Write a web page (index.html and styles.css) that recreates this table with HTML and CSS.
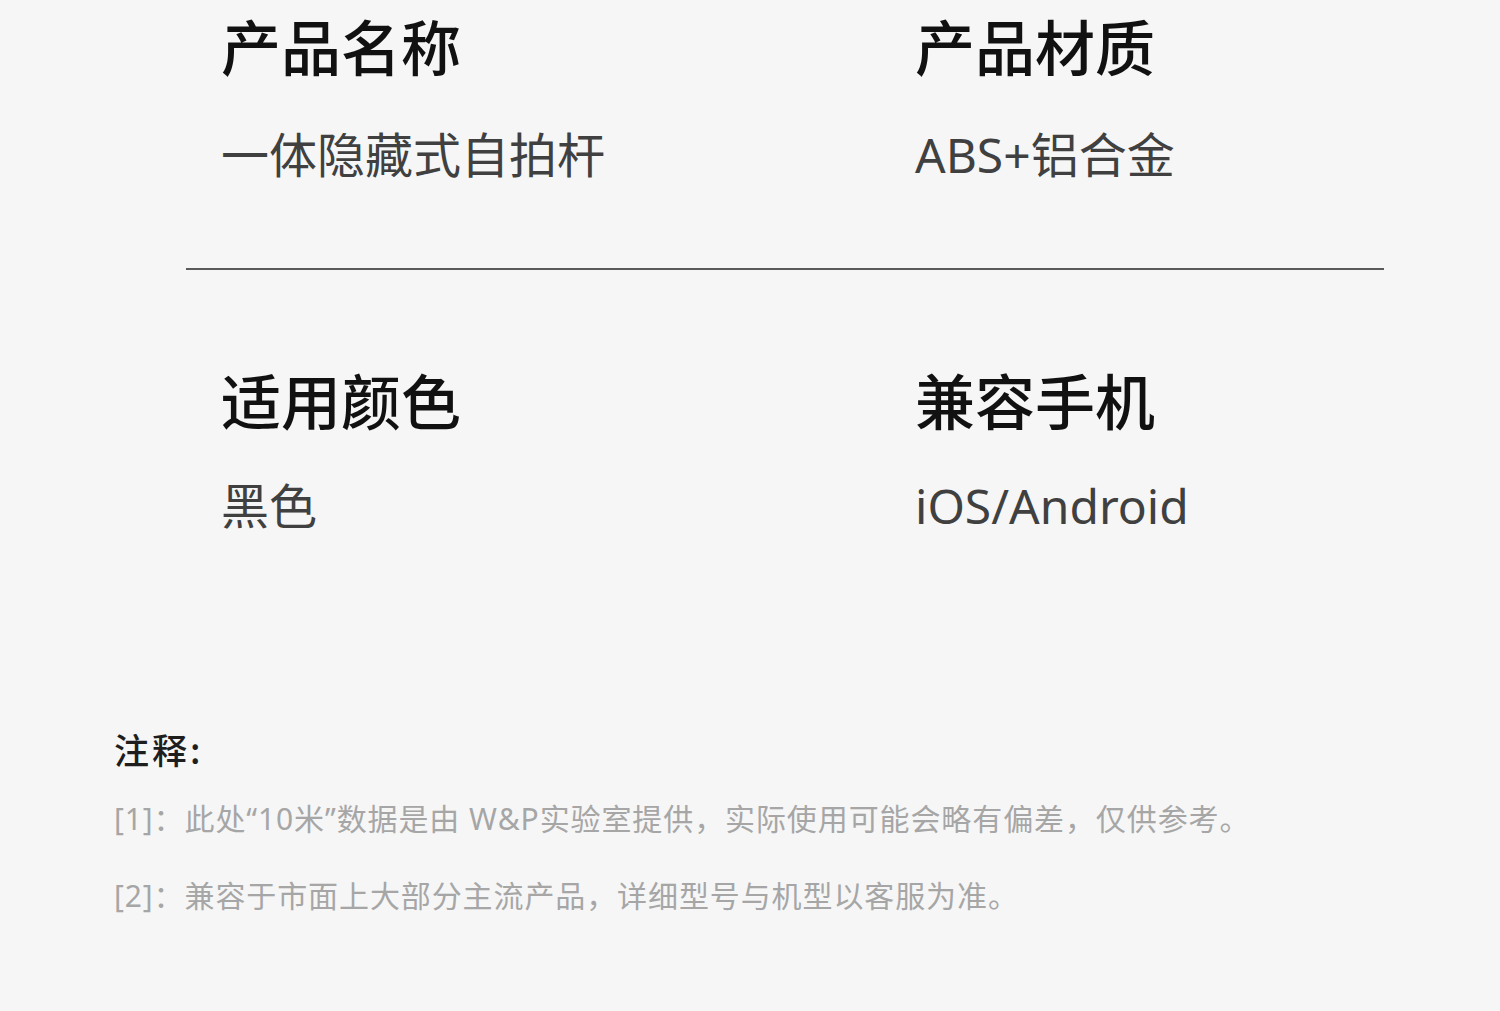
FILE: index.html
```html
<!DOCTYPE html>
<html lang="zh-CN">
<head>
  <meta charset="UTF-8" />
  <meta name="viewport" content="width=device-width, initial-scale=1.0"/>
  <title>产品参数</title>
  <link rel="stylesheet" href="styles.css">
</head>
<body>

<div class="page">
  <div class="specs">
    <div class="spec-row">
      <div class="spec">
        <h2>产品名称</h2>
        <p>一体隐藏式自拍杆</p>
      </div>
      <div class="spec">
        <h2>产品材质</h2>
        <p>ABS+铝合金</p>
      </div>
    </div>

    <hr class="divider">

    <div class="spec-row">
      <div class="spec">
        <h2>适用颜色</h2>
        <p>黑色</p>
      </div>
      <div class="spec">
        <h2>兼容手机</h2>
        <p>iOS/Android</p>
      </div>
    </div>
  </div>

  <div class="notes">
    <h3>注释:</h3>
    <p>[1]：此处“10米”数据是由 W&amp;P实验室提供，实际使用可能会略有偏差，仅供参考。</p>
    <p>[2]：兼容于市面上大部分主流产品，详细型号与机型以客服为准。</p>
  </div>
</div>

</body>
</html>
```

FILE: styles.css
```css
body {
  margin: 0;
  background: #f6f6f6;
  font-family: "Noto Sans", "Noto Sans CJK SC", sans-serif;
}
.page {
  width: 1500px;
  height: 1011px;
  overflow: hidden;
}
.specs {
  padding: 15px 116px 0 186px;
}
.spec-row {
  display: grid;
  grid-template-columns: 694px 1fr;
  padding-left: 35px;
}
.spec h2 {
  margin: 0;
  font-size: 60px;
  line-height: 60px;
  font-weight: 500;
  color: #111;
  font-family: "Noto Sans CJK SC", sans-serif;
}
.spec p {
  margin: 56px 0 0;
  font-size: 48px;
  line-height: 48px;
  font-weight: 400;
  color: #404040;
}
.divider {
  border: none;
  height: 2px;
  background: #5a5a5a;
  margin: 89px 0 99px;
}
.spec-row + .divider + .spec-row .spec p {
  margin-top: 53px;
}
.notes {
  padding: 202px 0 0 114px;
}
.notes h3 {
  margin: 0;
  font-size: 35px;
  line-height: 34px;
  font-weight: 500;
  letter-spacing: 3px;
  color: #1e1e1e;
  font-family: "Noto Sans CJK SC", sans-serif;
}
.notes p {
  margin: 38px 0 0;
  font-size: 30px;
  line-height: 30px;
  letter-spacing: 0.9px;
  color: #a6a6a6;
}
.notes p + p {
  margin-top: 47px;
}
```
